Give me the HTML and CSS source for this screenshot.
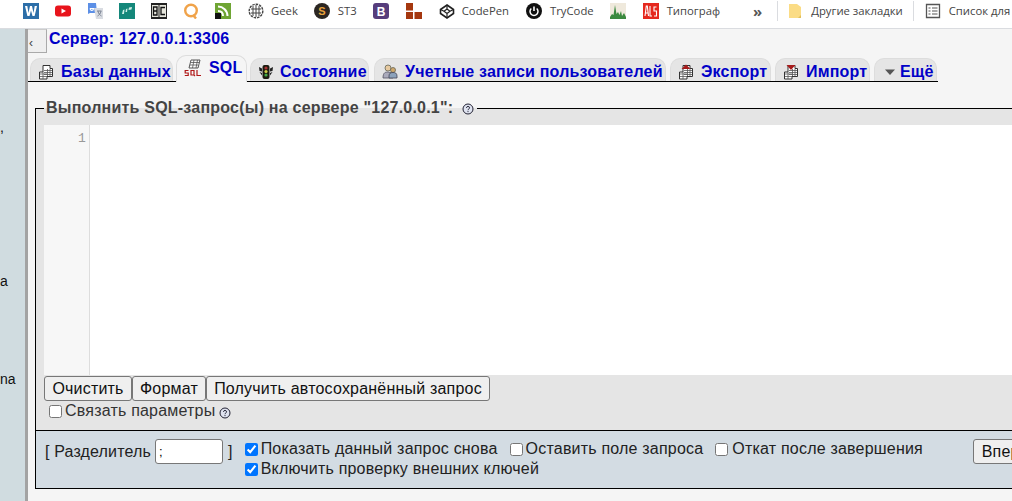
FILE: index.html
```html
<!DOCTYPE html>
<html lang="ru">
<head>
<meta charset="utf-8">
<title>phpMyAdmin</title>
<link rel="stylesheet" href="styles.css">
</head>
<body>
<svg class="defs" width="0" height="0">
  <symbol id="tbl" viewBox="0 0 16 16">
    <path d="M5 1.500h7v3h2.500v8H9v2.500H1.500V8H5z" fill="#fff" stroke="#333" stroke-width="1"/>
    <path d="M6 6.500h8M6 8.500h8M6 10.500h8M9.500 5v7M12 5v7M2 10h7M2 12.500h7M5 8v7" stroke="#555" stroke-width=".8" fill="none"/>
  </symbol>
  <symbol id="help" viewBox="0 0 12 12">
    <circle cx="6" cy="6" r="5" fill="#dfe3f0" stroke="#223" stroke-width="1"/>
    <path d="M4.400 4.800C4.500 3 7.600 3 7.600 4.800 7.600 6 6 5.900 6 7.200M6 8.100v1" stroke="#223" fill="none" stroke-width="1"/>
  </symbol>
</svg>
<nav class="bookmarks">
  <svg class="bm bm-w" viewBox="0 0 16 16"><rect width="16" height="16" fill="#2c6ea8"/><path d="M2 3h2.300l1.200 7L7 3h2l1.500 7 1.200-7H14l-2.400 10H9.500L8 7.500 6.500 13H4.400z" fill="#fff"/></svg>
  <svg class="bm" viewBox="0 0 16 16"><rect y="2.500" width="16" height="11" rx="3" fill="#e8141c"/><path d="M6.500 5.500v5L11 8z" fill="#fff"/></svg>
  <svg class="bm" viewBox="0 0 16 16"><path d="M1 0h8l1 10H3l-2 1z" fill="#5c8fe6"/><path d="M7 5h9v11H9z" fill="#d9dce2"/><path d="M3 5.500h3.500c0 2-3 3-3.500 0" fill="none" stroke="#fff" stroke-width="1.200"/><path d="M10 8h4.500M11 8c.5 3 2 4 3.500 5M14 8c-.5 3-2 4-3.500 5" stroke="#7c8494" stroke-width="1" fill="none"/></svg>
  <svg class="bm" viewBox="0 0 16 16"><rect width="16" height="16" fill="#14877a"/><path d="M3 11l1-4 1.500-.5L5 11zM6.500 9l.5-3 1.500-.5L8 9zM9.500 7l.5-2.500L13 4l-.5 2.500z" fill="#cfeee6"/></svg>
  <svg class="bm" viewBox="0 0 16 16"><rect width="16" height="16" fill="#222"/><rect x="1" y="2" width="14" height="12" fill="#e6e6dc"/><path d="M8 1v14" stroke="#222"/><path d="M2.500 4h3.500v8H2.500zM2.500 8H6M14 4.500H10v7h4" stroke="#111" stroke-width="1.300" fill="none"/></svg>
  <svg class="bm" viewBox="0 0 16 16"><circle cx="8" cy="7.500" r="5.800" fill="none" stroke="#f0a34a" stroke-width="2.400"/><path d="M10 12l3 3.500" stroke="#f0a34a" stroke-width="2.400"/></svg>
  <svg class="bm" viewBox="0 0 16 16"><rect width="16" height="16" fill="#6fa534"/><path d="M3 3.500c5 0 9.500 4 9.500 9.500M3 8c3 0 5 2 5 5" stroke="#fff" stroke-width="2" fill="none"/><rect y="10" width="6" height="6" fill="#111"/></svg>
  <span class="bm-text bm-geek"><svg class="bm" viewBox="0 0 16 16"><circle cx="8" cy="8" r="6.800" fill="none" stroke="#444" stroke-width="1.400" stroke-dasharray="2.500 1"/><path d="M8 2v12M3 6h10M3 10h10M5 3v10M11 3v10" stroke="#444" stroke-width="1"/></svg>Geek</span>
  <span class="bm-text bm-st3"><svg class="bm" viewBox="0 0 16 16"><circle cx="8" cy="8" r="8" fill="#2b2622"/><text class="bm-s" x="8" y="12">S</text></svg>ST3</span>
  <svg class="bm bm-b" viewBox="0 0 16 16"><rect width="16" height="16" rx="3" fill="#563d7c"/><text class="bm-bs" x="8" y="12.500">B</text></svg>
  <svg class="bm" viewBox="0 0 16 16"><path d="M0 0h7v7.500H0zM0 9h7v7H0zM8.500 9H16v7H8.500z" fill="#a5370f"/></svg>
  <span class="bm-text bm-pen"><svg class="bm" viewBox="0 0 16 16"><path d="M8 2l6.500 4.500v4L8 15l-6.500-4.500v-4z" fill="none" stroke="#222" stroke-width="1.600"/><path d="M8 6l3 2.300L8 10.500 5 8.300zM8 2v4M8 10.500V15M1.500 6.500L5 8.300M14.500 6.500L11 8.300" fill="none" stroke="#222" stroke-width="1.200"/></svg>CodePen</span>
  <span class="bm-text bm-try"><svg class="bm" viewBox="0 0 16 16"><circle cx="8" cy="8" r="8" fill="#111"/><path d="M5.300 5.500a4 4 0 1 0 5.400 0" fill="none" stroke="#fff" stroke-width="1.500"/><path d="M8 3.500v4.500" stroke="#fff" stroke-width="1.600"/></svg>TryCode</span>
  <svg class="bm bm-chart" viewBox="0 0 16 16"><rect width="16" height="16" fill="#efe9dc"/><path d="M0 14l2-3 1.500 1L5 2l1.500 9 1.500-2 1.500 3L11 8l1 5 2-3 2 4v2H0z" fill="#3c8a3f"/></svg>
  <span class="bm-text bm-als"><svg class="bm" viewBox="0 0 16 16"><rect width="16" height="16" fill="#e5281e"/><path d="M2 13L3.300 3h1l1.200 10M2.500 10h2.500M7 3v10h2M13.500 4h-2.500v4h2.500v5H11" fill="none" stroke="#fff" stroke-width="1.100"/></svg>Типограф</span>
  <span class="bm-more">»</span>
  <span class="bm-sep"></span>
  <span class="bm-text bm-other"><svg class="bm-folder" viewBox="0 0 12 16"><path d="M0 1h8l4 3v11H0z" fill="#fbdc85"/><path d="M9 15l3-3v3z" fill="#e2bf5a"/></svg>Другие закладки</span>
  <span class="bm-sep bm-sep2"></span>
  <span class="bm-text bm-list"><svg class="bm" viewBox="0 0 16 16"><path d="M1.500 1.500h13v13h-13z" fill="none" stroke="#555" stroke-width="1.300"/><path d="M3.500 5h2M7 5h5.500M3.500 8h2M7 8h5.500M3.500 11h2M7 11h5.500" stroke="#555" stroke-width="1.200"/></svg>Список для</span>
</nav>
<div class="page">
  <aside class="sidebar">
    <span class="frag frag1">,</span>
    <span class="frag frag2">а</span>
    <span class="frag frag3">na</span>
  </aside>
  <main class="main">
    <header class="server">
      <button class="collapse" type="button">‹</button>
      <a class="server-link" href="#">Сервер: 127.0.0.1:3306</a>
    </header>
    <ul class="tabs">
      <li class="tab tab-db"><svg class="ti"><use href="#tbl"/></svg><a href="#">Базы данных</a></li>
      <li class="tab tab-active"><svg class="ti ti-sql" viewBox="0 0 18 18"><path d="M7 1h9l-2 8H5z" fill="#fff" stroke="#555"/><path d="M7 3.500h8M6 6h8M10 1L8.500 9M13.500 1L12 9" stroke="#555" stroke-width=".8"/><path d="M4.500 11.500H1.200v2.500h3v2.500H.8M7 11.500h3v4.500H7zM9.500 15.500l1.500 1.500M13 11v5.500h4" fill="none" stroke="#b01818" stroke-width="1.200"/></svg><a href="#">SQL</a></li>
      <li class="tab tab-status"><svg class="ti" viewBox="0 0 16 16"><path d="M1 3l3 1.500v3l-2.500-.5zM15 3l-3 1.500v3l2.500-.5zM1.500 8L4 9v2.500zM14.500 8L12 9v2.500z" fill="#222"/><rect x="4.500" y="1" width="7" height="14" rx="2" fill="#1c1c10"/><circle cx="8" cy="4" r="1.600" fill="#a33"/><circle cx="8" cy="7.500" r="1.600" fill="#cc4"/><circle cx="8" cy="11" r="1.600" fill="#4a4"/></svg><a href="#">Состояние</a></li>
      <li class="tab tab-users"><svg class="ti" viewBox="0 0 16 16"><circle cx="6" cy="4" r="3" fill="#e6c9a0" stroke="#665" stroke-width=".8"/><path d="M1 14c0-6 3-6 5-6l5 1v5z" fill="#aab" stroke="#556" stroke-width=".8"/><circle cx="11" cy="6" r="2.500" fill="#cfa86c" stroke="#665" stroke-width=".8"/><path d="M7 12c0-3 2-3.500 4-3.500s4 .5 4 3.500v2H7z" fill="#8ca2bb" stroke="#445" stroke-width=".8"/></svg><a href="#">Учетные записи пользователей</a></li>
      <li class="tab tab-export"><svg class="ti" viewBox="0 0 16 16"><use href="#tbl"/><path d="M8 .5l4.500 4.500h-9z" fill="#a61c1c"/></svg><a href="#">Экспорт</a></li>
      <li class="tab tab-import"><svg class="ti" viewBox="0 0 16 16"><use href="#tbl"/><path d="M8 6L3.500 1h9z" fill="#a61c1c"/></svg><a href="#">Импорт</a></li>
      <li class="tab tab-more"><svg class="caret" viewBox="0 0 12 8"><path d="M1 1.500h10L6 7z" fill="#555"/></svg><a href="#">Ещё</a></li>
    </ul>
    <fieldset class="query">
      <legend class="query-title">Выполнить SQL-запрос(ы) на сервере "127.0.0.1":<svg class="help help-title"><use href="#help"/></svg></legend>
      <div class="editor">
        <div class="gutter">1</div>
        <div class="code"></div>
      </div>
      <div class="actions">
        <button class="btn btn-clear" type="button">Очистить</button>
        <button class="btn btn-format" type="button">Формат</button>
        <button class="btn btn-auto" type="button">Получить автосохранённый запрос</button>
      </div>
      <label class="bind"><input type="checkbox">Связать параметры<svg class="help"><use href="#help"/></svg></label>
    </fieldset>
    <div class="footer">
      <label class="delim"><span class="delim-label">[ Разделитель</span><input class="delim-input" type="text" value=";"><span class="delim-end">]</span></label>
      <div class="opts">
        <div class="opt-row">
          <label class="opt opt-show"><input type="checkbox" checked>Показать данный запрос снова</label>
          <label class="opt opt-keep"><input type="checkbox">Оставить поле запроса</label>
          <label class="opt opt-roll"><input type="checkbox">Откат после завершения</label>
        </div>
        <div class="opt-row">
          <label class="opt"><input type="checkbox" checked>Включить проверку внешних ключей</label>
        </div>
      </div>
      <button class="btn go" type="button">Вперёд</button>
    </div>
  </main>
</div>
</body>
</html>
```
FILE: styles.css
```css
* { box-sizing: border-box; }
html, body { margin: 0; height: 100%; overflow: hidden; }
body {
  width: 1012px;
  height: 501px;
  display: flex;
  flex-direction: column;
  font-family: "Liberation Sans", Arial, sans-serif;
  font-size: 16px;
  letter-spacing: .2px;
  background: #f5f5f5;
}
.defs { position: absolute; }

.bookmarks {
  flex: none;
  height: 29px;
  display: flex;
  align-items: center;
  gap: 16px;
  padding: 0 0 7px 23px;
  background: #fff;
  border-bottom: 1px solid #dadce0;
  font-family: "Open Sans", "Noto Sans", sans-serif;
  font-size: 11.3px;
  letter-spacing: 0;
  color: #444;
  white-space: nowrap;
  overflow: hidden;
}
.bm { width: 16px; height: 16px; flex: none; }
.bm-text { display: flex; align-items: center; gap: 7px; }
.bm-geek { margin-left: 1px; }
.bm-s { font: bold 11px "Liberation Sans", sans-serif; fill: #e8a33c; text-anchor: middle; }
.bm-bs { font: bold 12px "Liberation Sans", sans-serif; fill: #fff; text-anchor: middle; }
.bm-st3 { gap: 8px; }
.bm-b { margin-right: 1px; }
.bm-pen { margin-left: 1px; }
.bm-try { margin-left: 1px; gap: 8px; }
.bm-chart { margin-right: 1px; }
.bm-als { gap: 8px; }
.bm-more { margin-left: 17px; font-size: 15px; font-weight: 700; color: #555; }
.bm-sep { width: 1px; height: 20px; background: #dadce0; margin-left: -1px; }
.bm-other { gap: 10px; margin-left: -5px; }
.bm-folder { width: 12px; height: 16px; flex: none; }
.bm-sep2 { margin-left: -6px; }
.bm-list { gap: 8px; margin-left: -5px; }

.page { flex: 1; display: flex; min-height: 0; }
.sidebar {
  flex: none;
  width: 28px;
  background: #d0dce0;
  border-right: 3px solid #a3a3a3;
  color: #111;
  font-size: 14px;
  letter-spacing: 0;
  display: flex;
  flex-direction: column;
  overflow: hidden;
}
.frag { line-height: 16px; height: 16px; }
.frag1 { margin-top: 90px; }
.frag2 { margin-top: 138px; }
.frag3 { margin-top: 82px; }

.main { flex: 1; min-width: 0; overflow: hidden; }
.server { display: flex; align-items: flex-start; gap: 2px; margin-left: -1px; height: 29px; }
.collapse {
  width: 20px;
  height: 24px;
  padding: 4px 0 0 1px;
  border: 1px solid #aaa;
  border-top-color: #ccc;
  background: #efefef;
  color: #444;
  font: 12px/1 "Liberation Sans", sans-serif;
  text-align: left;
}
.server-link {
  color: #0000c8;
  font-weight: 700;
  text-decoration: none;
  line-height: 20px;
}
.tabs {
  list-style: none;
  margin: 0;
  padding: 0 0 0 2px;
  width: 910px;
  height: 24px;
  display: flex;
  align-items: flex-end;
  gap: 4px;
  border-bottom: 1px solid #000;
}
.tab {
  height: 23px;
  display: flex;
  align-items: center;
  gap: 7px;
  padding: 4px 0 0 7px;
  background: #e5e5e5;
  border-radius: 10px 10px 0 0;
  flex: none;
  border: 1px solid #ddd;
  border-bottom: 0;
}
.tab a { color: #0000c8; font-weight: 700; text-decoration: none; white-space: nowrap; }
.tab-active {
  height: 27px;
  margin-bottom: -1px;
  padding: 0 0 2px 7px;
  gap: 9px;
  background: #f5f5f5;
}
.tab-db { width: 143px; margin-right: -1px; }
.tab-active { width: 71px; margin-right: -1px; }
.tab-status { width: 119px; margin-right: 1px; gap: 6px; }
.tab-users { width: 292px; }
.tab-export { width: 101px; }
.tab-import { width: 95px; }
.tab-more { width: 63px; gap: 4px; padding-left: 9px; }
.ti { width: 16px; height: 16px; flex: none; }
.ti-sql { width: 18px; height: 18px; margin-right: -2px; }
.caret { width: 12px; height: 8px; flex: none; }

.query {
  width: 1100px;
  height: 331px;
  margin: 17px 0 0 7px;
  padding: 0 8px;
  border: 0;
  border-top: 1px solid #000;
  border-left: 1px solid #000;
  background: #e5e5e5;
}
.query-title {
  padding: 0 3px 0 2px;
  margin-left: 0;
  font-weight: 700;
  color: #444;
  line-height: 18px;
  letter-spacing: .22px;
}
.help { width: 12px; height: 12px; vertical-align: -2px; margin-left: 4px; }
.help-title { margin-left: 9px; }
.editor { display: flex; height: 250px; margin-top: 8px; background: #fff; }
.gutter {
  width: 46px;
  padding: 6px 3px 0 0;
  background: #f7f7f7;
  border-right: 1px solid #ddd;
  color: #999;
  text-align: right;
  font: 13px/16px "Liberation Mono", monospace;
}
.code { flex: 1; }
.actions { display: flex; margin-top: 1px; }
.btn {
  height: 25px;
  padding: 0 8px;
  border: 1px solid #777;
  border-radius: 3px;
  background: #efefef;
  color: #111;
  font: 16px "Liberation Sans", sans-serif;
  letter-spacing: .2px;
  flex: none;
}
.btn-clear { width: 88px; padding: 0; }
.btn-format { width: 74px; padding: 0; }
.btn-auto { width: 284px; padding: 0; }
.bind { display: flex; align-items: center; height: 20px; margin: 0 0 0 4px; color: #333; }
.bind input { width: 13px; height: 13px; margin: 0 3px 0 1px; flex: none; }
.opt input { width: 13px; height: 13px; margin: 0 3px 0 0; flex: none; }
.bind .help { margin-left: 4px; margin-top: 3px; }

.footer {
  width: 1100px;
  height: 59px;
  margin-left: 7px;
  padding: 8px 0 0 9px;
  display: flex;
  align-items: flex-start;
  background: #d3dce3;
  border: 1px solid #000;
  color: #222;
}
.delim { display: flex; align-items: center; height: 25px; flex: none; }
.delim-label { letter-spacing: .16px; }
.delim-input {
  width: 68px;
  height: 25px;
  margin-left: 4px;
  padding: 0 3px;
  border: 1px solid #777;
  border-radius: 3px;
  background: #fff;
  font: 13px "Liberation Sans", sans-serif;
}
.delim-end { margin-left: 5px; }
.opts { margin-left: 12px; flex: none; width: 728px; }
.opt-row { display: flex; height: 20px; }
.opt { display: flex; align-items: center; height: 20px; }
.opt-show { margin-right: 12px; }
.opt-keep { margin-right: 12px; }
.opt-roll input { margin-right: 4px; }
```
